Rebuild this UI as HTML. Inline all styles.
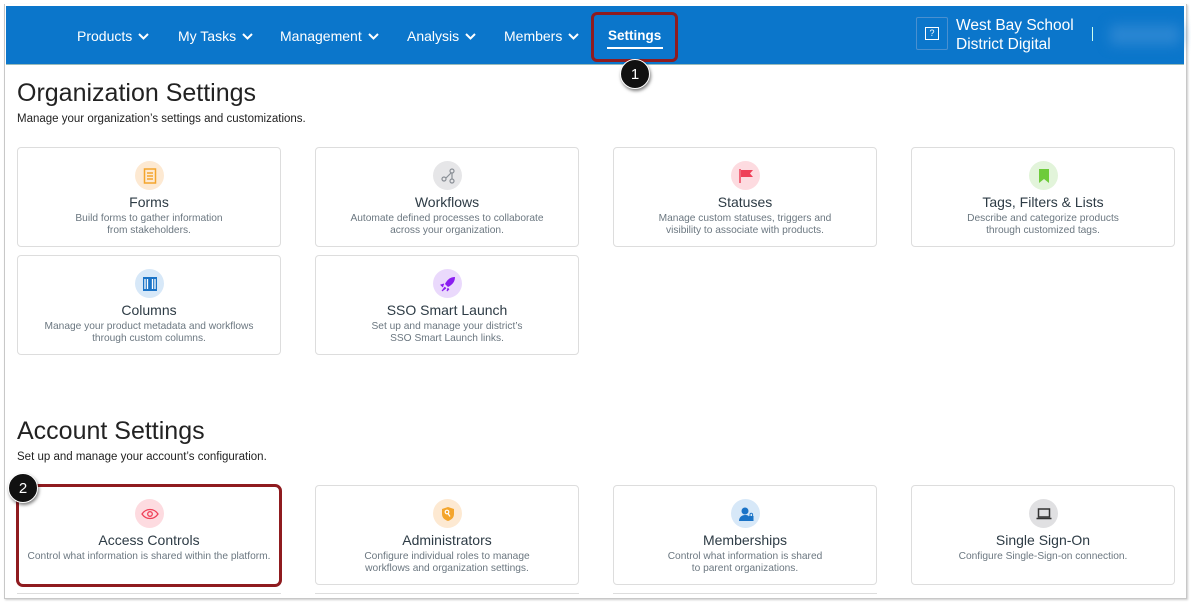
<!DOCTYPE html>
<html><head><meta charset="utf-8"><style>
*{box-sizing:border-box;margin:0;padding:0}
body{width:1191px;height:602px;background:#fff;font-family:"Liberation Sans",sans-serif;position:relative;overflow:hidden}
.frame{position:absolute;left:4px;top:4px;width:1183px;height:595px;border:1px solid #c8c8c8;border-top:none;box-shadow:1px 1px 2px rgba(0,0,0,.2)}
.hdr{position:absolute;left:6px;top:6px;width:1178px;height:59px;background:#0b76cb;border-bottom:1px solid #9bb}
.nav{position:absolute;top:28px;color:#fff;font-size:14px}
.nav svg{vertical-align:middle;margin-left:6px}
.h1{position:absolute;left:17px;font-size:25px;color:#222}
.sub{position:absolute;left:17px;font-size:11.5px;color:#222}
.card{position:absolute;width:264px;height:100px;border:1px solid #ddd;border-radius:4px;background:#fff;text-align:center}
.ic{position:absolute;left:117px;top:13px;width:29px;height:29px;border-radius:50%;display:flex;align-items:center;justify-content:center}
.t{position:absolute;left:0;right:0;top:46px;font-size:14px;color:#2d3b45}
.d{position:absolute;left:0;right:0;top:65px;font-size:10.2px;line-height:12px;color:#6b7780}
.badge{position:absolute;width:30px;height:30px;border-radius:50%;background:#111;color:#fff;font-size:15px;text-align:center;line-height:30px;box-shadow:1px 2px 3px rgba(0,0,0,.5);border:1px solid #fff}
</style></head><body>
<div class="frame"></div>
<div class="hdr"></div>
<div class="nav" style="left:77px">Products<svg width="11" height="8"><path d="M1 1l4.5 4.5L10 1" stroke="#fff" stroke-width="2" fill="none"/></svg></div>
<div class="nav" style="left:178px">My Tasks<svg width="11" height="8"><path d="M1 1l4.5 4.5L10 1" stroke="#fff" stroke-width="2" fill="none"/></svg></div>
<div class="nav" style="left:280px">Management<svg width="11" height="8"><path d="M1 1l4.5 4.5L10 1" stroke="#fff" stroke-width="2" fill="none"/></svg></div>
<div class="nav" style="left:407px">Analysis<svg width="11" height="8"><path d="M1 1l4.5 4.5L10 1" stroke="#fff" stroke-width="2" fill="none"/></svg></div>
<div class="nav" style="left:504px">Members<svg width="11" height="8"><path d="M1 1l4.5 4.5L10 1" stroke="#fff" stroke-width="2" fill="none"/></svg></div>
<div class="nav" style="left:608px;font-weight:bold;font-size:13.5px">Settings</div>
<div style="position:absolute;left:607px;top:47px;width:56px;height:2px;background:#fff"></div>
<div style="position:absolute;left:591px;top:12px;width:87px;height:50px;border:3px solid #8f1b1f;border-radius:6px"></div>
<div class="badge" style="left:620px;top:59px">1</div>
<div style="position:absolute;left:916px;top:17px;width:32px;height:33px;border:1px solid #4a90d0;border-radius:2px"></div>
<div style="position:absolute;left:925px;top:27px;width:14px;height:13px;border:1.5px solid #fff;color:#fff;font-size:9px;text-align:center;line-height:11px">?</div>
<div style="position:absolute;left:956px;top:16px;color:#fff;font-size:15.5px;line-height:19px">West Bay School<br>District Digital</div>
<div style="position:absolute;left:1092px;top:27px;width:1px;height:14px;background:#cfe"></div>
<div style="position:absolute;left:1110px;top:25px;width:70px;height:20px;background:#2a86d2;filter:blur(6px)"></div>

<div class="h1" style="top:79px">Organization Settings</div>
<div class="sub" style="top:113px">Manage your organization’s settings and customizations.</div>

<div class="card" style="left:17px;top:147px"><div class="ic" style="background:#fde9d2"><svg width="14" height="16"><rect x="1.5" y="1" width="11" height="14" fill="none" stroke="#f4a52c" stroke-width="1.5"/><path d="M4 5h6M4 8h6M4 11h6" stroke="#f4a52c" stroke-width="1.5"/></svg></div><div class="t">Forms</div><div class="d">Build forms to gather information<br>from stakeholders.</div></div>
<div class="card" style="left:315px;top:147px"><div class="ic" style="background:#e6e6e8"><svg width="14" height="16"><circle cx="3" cy="11" r="2" fill="none" stroke="#8a8f96" stroke-width="1.2"/><circle cx="11" cy="3" r="2" fill="none" stroke="#8a8f96" stroke-width="1.2"/><circle cx="11" cy="13" r="2" fill="none" stroke="#8a8f96" stroke-width="1.2"/><path d="M11 5v6M5 10l5-5" stroke="#8a8f96" stroke-width="1.2"/></svg></div><div class="t">Workflows</div><div class="d">Automate defined processes to collaborate<br>across your organization.</div></div>
<div class="card" style="left:613px;top:147px"><div class="ic" style="background:#fddbe0"><svg width="16" height="16"><path d="M2 1v14" stroke="#ef4058" stroke-width="1.5"/><path d="M3 2h12l-3 3.5 3 3.5H3z" fill="#ef4058"/></svg></div><div class="t">Statuses</div><div class="d">Manage custom statuses, triggers and<br>visibility to associate with products.</div></div>
<div class="card" style="left:911px;top:147px"><div class="ic" style="background:#e2f4da"><svg width="12" height="16"><path d="M1 1h10v14l-5-4-5 4z" fill="#6ecb3b"/></svg></div><div class="t">Tags, Filters &amp; Lists</div><div class="d">Describe and categorize products<br>through customized tags.</div></div>
<div class="card" style="left:17px;top:255px"><div class="ic" style="background:#d7e8f8"><svg width="16" height="16"><rect x="1" y="1" width="14" height="14" fill="#1a73c7"/><path d="M5.5 3v10M10.5 3v10M3 3v10M13 3v10" stroke="#fff" stroke-width="1.3"/></svg></div><div class="t">Columns</div><div class="d">Manage your product metadata and workflows<br>through custom columns.</div></div>
<div class="card" style="left:315px;top:255px"><div class="ic" style="background:#ead9fc"><svg width="16" height="16"><path d="M15 1c-5 0-8 3-10 7l3 3c4-2 7-5 7-10z" fill="#8a1df0"/><path d="M4 8l-3 1 2 2M8 12l-1 3 2-2M5 11l-3 4 4-3" fill="#8a1df0" stroke="#8a1df0"/></svg></div><div class="t">SSO Smart Launch</div><div class="d">Set up and manage your district’s<br>SSO Smart Launch links.</div></div>

<div class="h1" style="top:417px">Account Settings</div>
<div class="sub" style="top:451px">Set up and manage your account’s configuration.</div>

<div class="card" style="left:17px;top:485px"><div class="ic" style="background:#fddbe0"><svg width="18" height="12"><path d="M1 6c4-6 12-6 16 0-4 6-12 6-16 0z" fill="none" stroke="#ef4058" stroke-width="1.3"/><circle cx="9" cy="6" r="2.3" fill="none" stroke="#ef4058" stroke-width="1.3"/></svg></div><div class="t">Access Controls</div><div class="d">Control what information is shared within the platform.</div></div>
<div style="position:absolute;left:16px;top:484px;width:266px;height:103px;border:3px solid #8f1b1f;border-radius:7px"></div>
<div class="badge" style="left:8px;top:473px">2</div>
<div class="card" style="left:315px;top:485px"><div class="ic" style="background:#fde9d2"><svg width="14" height="16"><path d="M7 1l6 2v5c0 4-3 6-6 7-3-1-6-3-6-7V3z" fill="#f4a52c"/><circle cx="6" cy="6" r="1.8" fill="none" stroke="#fff" stroke-width="1.2"/><path d="M7 7.5l2 3" stroke="#fff" stroke-width="1.2"/></svg></div><div class="t">Administrators</div><div class="d">Configure individual roles to manage<br>workflows and organization settings.</div></div>
<div class="card" style="left:613px;top:485px"><div class="ic" style="background:#d7e8f8"><svg width="16" height="16"><circle cx="7" cy="5" r="3.5" fill="#1a73c7"/><path d="M1 15c0-4 3-6 6-6s4 1 4 2v4z" fill="#1a73c7"/><rect x="11" y="10" width="4.5" height="5" fill="#1a73c7"/><path d="M12 10V8.5a1.3 1.3 0 0 1 2.6 0V10" stroke="#1a73c7" fill="none"/></svg></div><div class="t">Memberships</div><div class="d">Control what information is shared<br>to parent organizations.</div></div>
<div class="card" style="left:911px;top:485px"><div class="ic" style="background:#e0e0e2"><svg width="16" height="12"><rect x="2.5" y="1" width="11" height="8" fill="none" stroke="#333" stroke-width="1.5"/><path d="M0.5 10.5h15" stroke="#333" stroke-width="1.5"/></svg></div><div class="t">Single Sign-On</div><div class="d">Configure Single-Sign-on connection.</div></div>
<div style="position:absolute;left:17px;top:593px;width:264px;height:1px;background:#ddd"></div>
<div style="position:absolute;left:315px;top:593px;width:264px;height:1px;background:#ddd"></div>
<div style="position:absolute;left:613px;top:593px;width:264px;height:1px;background:#ddd"></div>
</body></html>
